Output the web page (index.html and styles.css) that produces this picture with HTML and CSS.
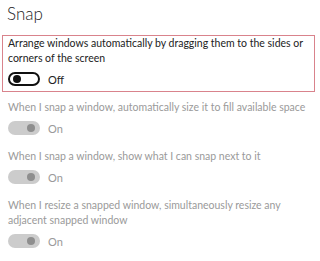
FILE: index.html
```html
<!DOCTYPE html>
<html lang="en">
<head>
    <meta charset="UTF-8">
    <title>Snap</title>
    <link rel="stylesheet" href="styles.css">
</head>
<body>
    <h1 class="title">Snap</h1>

    <div class="setting focused">
        <p class="setting-label">Arrange windows automatically by dragging them to the sides or corners of the screen</p>
        <div class="toggle-row">
            <span class="toggle off"><span class="knob"></span></span>
            <span class="toggle-text">Off</span>
        </div>
    </div>

    <div class="setting disabled">
        <p class="setting-label">When I snap a window, automatically size it to fill available space</p>
        <div class="toggle-row">
            <span class="toggle on"><span class="knob"></span></span>
            <span class="toggle-text">On</span>
        </div>
    </div>

    <div class="setting disabled">
        <p class="setting-label">When I snap a window, show what I can snap next to it</p>
        <div class="toggle-row">
            <span class="toggle on"><span class="knob"></span></span>
            <span class="toggle-text">On</span>
        </div>
    </div>

    <div class="setting disabled">
        <p class="setting-label">When I resize a snapped window, simultaneously resize any adjacent snapped window</p>
        <div class="toggle-row">
            <span class="toggle on"><span class="knob"></span></span>
            <span class="toggle-text">On</span>
        </div>
    </div>
</body>
</html>
```

FILE: styles.css
```css
body {
    margin: 0;
    padding: 0;
    font-family: 'Lato', sans-serif;
    background: #fff;
    color: #000;
    width: 320px;
    overflow: hidden;
}

.title {
    margin: 0;
    padding: 3px 0 0 7px;
    height: 33px;
    box-sizing: border-box;
    font-size: 17px;
    font-weight: 300;
    line-height: 22px;
    color: #222;
}

.setting {
    margin: 0 5px 7px 2px;
    padding: 0 5px 5px 5px;
    border: 1px solid transparent;
}

.setting.focused {
    margin-top: 2px;
    border-color: #d9838c;
}

.setting-label {
    margin: 0;
    font-size: 10.5px;
    line-height: 15px;
    color: #222;
}

.disabled .setting-label {
    color: #9a9a9a;
}

.toggle-row {
    display: flex;
    align-items: center;
    gap: 8px;
    margin-top: 6px;
    height: 14px;
}

.toggle {
    box-sizing: border-box;
    width: 32px;
    height: 14px;
    border-radius: 7px;
    display: flex;
    align-items: center;
    padding: 0 3px;
}

.toggle.off {
    border: 2px solid #111;
    background: #fff;
}

.toggle.on {
    background: #cccccc;
    justify-content: flex-end;
}

.knob {
    width: 8px;
    height: 8px;
    border-radius: 50%;
}

.toggle.off .knob {
    background: #111;
}

.toggle.on .knob {
    background: #8e8e8e;
    margin-right: 2px;
}

.toggle-text {
    font-size: 11px;
    color: #222;
}

.disabled .toggle-text {
    color: #9a9a9a;
}
```
